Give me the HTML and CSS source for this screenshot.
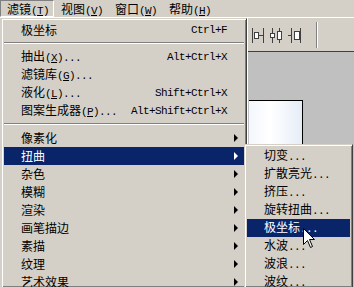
FILE: index.html
```html
<!DOCTYPE html>
<html lang="zh-CN">
<head>
<meta charset="utf-8">
<title>滤镜菜单</title>
<link rel="stylesheet" href="styles.css">
</head>
<body>
<div class="menubar">
  <div class="mb-item pressed">滤镜<span class="a">(<u>T</u>)</span></div>
  <div class="mb-item">视图<span class="a">(<u>V</u>)</span></div>
  <div class="mb-item">窗口<span class="a">(<u>W</u>)</span></div>
  <div class="mb-item">帮助<span class="a">(<u>H</u>)</span></div>
</div>
<div class="work">
  <div class="left-pane"></div>
  <div class="right-pane">
    <div class="toolbar">
      <svg class="tb-icon" width="12" height="15" viewBox="0 0 12 15"><path d="M0.5 0v15M11.5 0v15" stroke="#404040" fill="none"/><rect x="2.5" y="4.5" width="4" height="6" fill="#fff" stroke="#404040"/><path d="M6.5 7.5h5" stroke="#404040"/></svg>
      <svg class="tb-icon" width="14" height="15" viewBox="0 0 14 15"><path d="M3.5 0v15M10.5 0v15" stroke="#404040" fill="none"/><rect x="1.5" y="5.5" width="4" height="4" fill="#fff" stroke="#404040"/><rect x="8.5" y="3.5" width="4" height="8" fill="#fff" stroke="#404040"/></svg>
      <svg class="tb-icon" width="14" height="15" viewBox="0 0 14 15"><path d="M3.5 0v15M12.5 0v15" stroke="#404040" fill="none"/><path d="M0 7.5h3" stroke="#404040"/><rect x="6.5" y="3.5" width="5" height="8" fill="#fff" stroke="#404040"/></svg>
      <div class="tb-sep"></div>
    </div>
    <div class="canvas">
      <div class="doc"></div>
    </div>
  </div>
</div>

<div class="menu main-menu">
  <div class="item"><span class="label">极坐标</span><span class="key">Ctrl+F</span><span class="arrow"></span></div>
  <div class="sep"></div>
  <div class="item"><span class="label">抽出<span class="a">(<u>X</u>)...</span></span><span class="key">Alt+Ctrl+X</span><span class="arrow"></span></div>
  <div class="item"><span class="label">滤镜库<span class="a">(<u>G</u>)...</span></span><span class="key"></span><span class="arrow"></span></div>
  <div class="item"><span class="label">液化<span class="a">(<u>L</u>)...</span></span><span class="key">Shift+Ctrl+X</span><span class="arrow"></span></div>
  <div class="item"><span class="label">图案生成器<span class="a">(<u>P</u>)...</span></span><span class="key">Alt+Shift+Ctrl+X</span><span class="arrow"></span></div>
  <div class="sep"></div>
  <div class="item"><span class="label">像素化</span><span class="key"></span><span class="arrow sub"></span></div>
  <div class="item active"><span class="label">扭曲</span><span class="key"></span><span class="arrow sub"></span></div>
  <div class="item"><span class="label">杂色</span><span class="key"></span><span class="arrow sub"></span></div>
  <div class="item"><span class="label">模糊</span><span class="key"></span><span class="arrow sub"></span></div>
  <div class="item"><span class="label">渲染</span><span class="key"></span><span class="arrow sub"></span></div>
  <div class="item"><span class="label">画笔描边</span><span class="key"></span><span class="arrow sub"></span></div>
  <div class="item"><span class="label">素描</span><span class="key"></span><span class="arrow sub"></span></div>
  <div class="item"><span class="label">纹理</span><span class="key"></span><span class="arrow sub"></span></div>
  <div class="item"><span class="label">艺术效果</span><span class="key"></span><span class="arrow sub"></span></div>
</div>

<div class="menu sub-menu">
  <div class="item"><span class="label">切变<span class="a">...</span></span></div>
  <div class="item"><span class="label">扩散亮光<span class="a">...</span></span></div>
  <div class="item"><span class="label">挤压<span class="a">...</span></span></div>
  <div class="item"><span class="label">旋转扭曲<span class="a">...</span></span></div>
  <div class="item active"><span class="label">极坐标<span class="a">...</span></span></div>
  <div class="item"><span class="label">水波<span class="a">...</span></span></div>
  <div class="item"><span class="label">波浪<span class="a">...</span></span></div>
  <div class="item"><span class="label">波纹<span class="a">...</span></span></div>
</div>

<svg class="cursor" width="13" height="21" viewBox="0 0 13 21"><path d="M0.5 0.5V16.5L4.5 12.5L7.5 19.5L9.5 18.5L6.5 11.5H11.5Z" fill="#fff" stroke="#000" stroke-linejoin="miter"/></svg>
</body>
</html>
```
FILE: styles.css
```css
html, body {
  margin: 0;
  padding: 0;
  width: 354px;
  height: 287px;
  overflow: hidden;
  background: #d4d0c8;
  font-family: "Noto Sans CJK SC", "Liberation Sans", sans-serif;
  font-size: 12px;
  color: #000;
}

.a {
  font-family: "Liberation Mono", "Noto Sans CJK SC", monospace;
  font-size: 11px;
  letter-spacing: -0.6px;
}

.a u {
  text-decoration: underline;
  text-underline-offset: 1px;
}

.menubar {
  display: flex;
  height: 18px;
  box-sizing: border-box;
  border-bottom: 1px solid #fff;
}

.mb-item {
  width: 54px;
  height: 17px;
  box-sizing: border-box;
  padding-left: 7px;
  line-height: 17px;
  white-space: nowrap;
}

.mb-item.pressed {
  border-top: 1px solid #808080;
  border-left: 1px solid #808080;
  border-right: 1px solid #fff;
  border-bottom: 1px solid #fff;
  padding-left: 6px;
  line-height: 15px;
}

.work {
  display: grid;
  grid-template-columns: 247px 1fr;
  height: 269px;
}

.right-pane {
  display: flex;
  flex-direction: column;
  border-left: 1px solid #fff;
}

.toolbar {
  height: 34px;
  box-sizing: border-box;
  display: flex;
  align-items: center;
  padding-left: 4px;
  gap: 5px;
  border-bottom: 1px solid #404040;
}

.tb-icon {
  display: block;
  margin-top: 1px;
}

.tb-sep {
  width: 1px;
  height: 26px;
  margin-left: 9px;
  background: #808080;
  border-right: 1px solid #fff;
}

.canvas {
  flex: 1;
  background: #c0c0c0;
  padding-top: 48px;
  padding-left: 1px;
}

.doc {
  width: 53px;
  height: 200px;
  background: linear-gradient(90deg, #f4f7fc 0%, #ffffff 40%, #e6edf7 100%);
  border-top: 1px solid #000;
  border-right: 1px solid #000;
}

.menu {
  position: absolute;
  box-sizing: border-box;
  border: 1px solid;
  border-color: #d4d0c8 #404040 #404040 #d4d0c8;
  box-shadow: inset 1px 1px #fff, inset -1px -1px #808080;
  padding: 2px;
  background: #d4d0c8;
  overflow: hidden;
}

.main-menu {
  left: 1px;
  top: 18px;
  width: 246px;
  height: 269px;
  border-bottom: 0;
  padding-bottom: 0;
}

.sub-menu {
  left: 244px;
  top: 144px;
  width: 109px;
  height: 143px;
  border-bottom: 0;
  padding-bottom: 0;
}

.item {
  display: flex;
  align-items: center;
  height: 18px;
  flex-shrink: 0;
  padding-left: 17px;
  padding-right: 3px;
  white-space: nowrap;
  line-height: 18px;
}

.item .label {
  flex: 1;
}

.item .key {
  font-family: "Liberation Mono", monospace;
  font-size: 11px;
  letter-spacing: -0.6px;
}

.item .arrow {
  width: 14px;
  height: 18px;
  position: relative;
}

.item .arrow.sub::after {
  content: "";
  position: absolute;
  left: 7px;
  top: 5px;
  border-left: 4px solid #000;
  border-top: 4px solid transparent;
  border-bottom: 4px solid transparent;
}

.item.active {
  background: #0a246a;
  color: #fff;
}

.item.active .arrow.sub::after {
  border-left-color: #fff;
}

.sep {
  height: 0;
  margin: 3px 0 4px 0;
  border-top: 1px solid #808080;
  border-bottom: 1px solid #fff;
}

.cursor {
  position: absolute;
  left: 303px;
  top: 228px;
}
```
